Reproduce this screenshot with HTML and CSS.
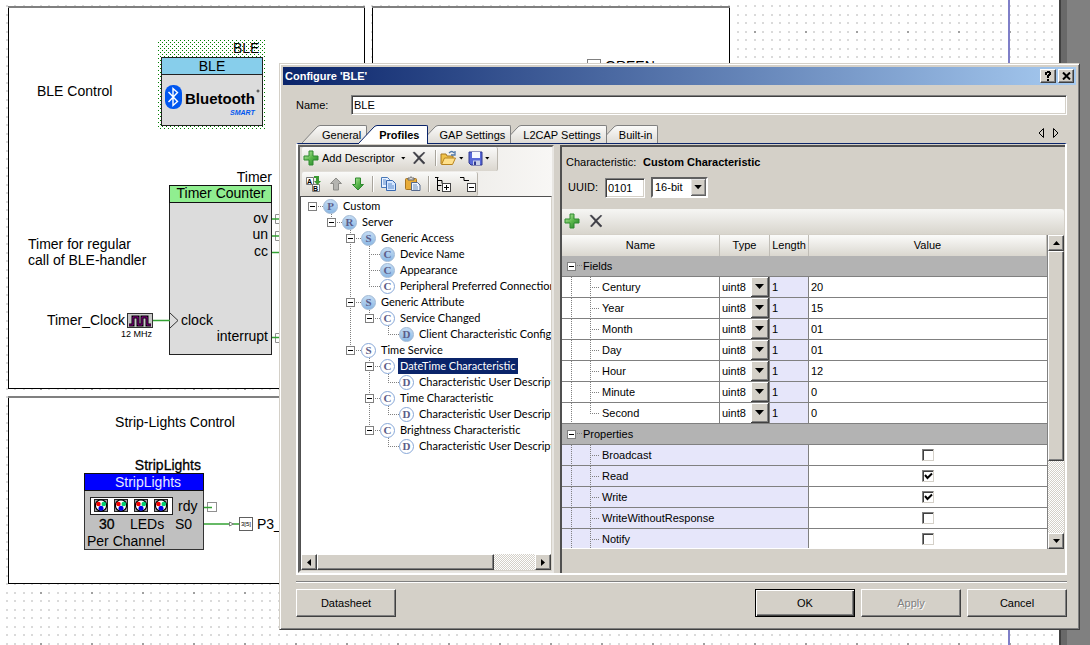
FILE: index.html
```html
<!DOCTYPE html>
<html lang="en">
<head>
<meta charset="utf-8">
<title>Configure 'BLE'</title>
<link rel="stylesheet" href="styles.css">
</head>
<body>
<main class="desktop">
<svg class="schematic" aria-label="Schematic">
  <defs>
    <pattern id="minor" x="40" y="31" width="51" height="51" patternUnits="userSpaceOnUse">
      <g fill="#dadada">
        <path d="M0 0h2v2h-2zM8 0h2v2h-2zM17 0h2v2h-2zM25 0h2v2h-2zM34 0h2v2h-2zM42 0h2v2h-2z"/>
        <path d="M0 8h2v2h-2zM8 8h2v2h-2zM17 8h2v2h-2zM25 8h2v2h-2zM34 8h2v2h-2zM42 8h2v2h-2z"/>
        <path d="M0 17h2v2h-2zM8 17h2v2h-2zM17 17h2v2h-2zM25 17h2v2h-2zM34 17h2v2h-2zM42 17h2v2h-2z"/>
        <path d="M0 25h2v2h-2zM8 25h2v2h-2zM17 25h2v2h-2zM25 25h2v2h-2zM34 25h2v2h-2zM42 25h2v2h-2z"/>
        <path d="M0 34h2v2h-2zM8 34h2v2h-2zM17 34h2v2h-2zM25 34h2v2h-2zM34 34h2v2h-2zM42 34h2v2h-2z"/>
        <path d="M0 42h2v2h-2zM8 42h2v2h-2zM17 42h2v2h-2zM25 42h2v2h-2zM34 42h2v2h-2zM42 42h2v2h-2z"/>
      </g>
      <path d="M0 0h2v2h-2z" fill="#a0a0a0"/>
    </pattern>
    <pattern id="selection" width="4" height="4" patternUnits="userSpaceOnUse">
      <path d="M0 0h1v1h-1zM2 2h1v1h-1z" fill="#008000"/>
    </pattern>
    <g id="led">
      <rect x="0.5" y="0.5" width="13" height="12" fill="#a0a0a0" stroke="#222"/>
      <circle cx="7" cy="6.5" r="5.6" fill="#fff" stroke="#000" stroke-width="1.2"/>
      <circle cx="4.4" cy="5" r="2.3" fill="#f00000"/>
      <circle cx="9.8" cy="5" r="2.3" fill="#00d070"/>
      <circle cx="7" cy="9.3" r="2.5" fill="#0000e8"/>
    </g>
  </defs>
  <rect width="1059" height="100%" fill="#fff"/>
  <rect width="1053" height="100%" fill="url(#minor)"/>
  <rect x="1008" width="2" height="100%" fill="#7f7fc8"/>
  <rect x="1059" width="2" height="100%" fill="#404040"/>
  <rect x="1061" width="6" height="100%" fill="#696969"/>

  <g fill="#fff" stroke="#000">
    <rect x="8.5" y="7.5" width="356" height="381"/>
    <rect x="372.5" y="7.5" width="357" height="381"/>
    <rect x="8.5" y="397.5" width="721" height="186"/>
  </g>
  <path d="M8 7h357M372 7h358M8 397h722" stroke="#808080" stroke-width="2"/>

  <text x="37" y="96">BLE Control</text>
  <rect x="158" y="40" width="107" height="89" fill="url(#selection)"/>
  <text x="233" y="53">BLE</text>
  <rect x="161.500" y="57.500" width="101" height="68" fill="#dcdcdc" stroke="#222"/>
  <rect x="161.500" y="57.500" width="101" height="17" fill="#87ceeb" stroke="#222"/>
  <text x="212" y="71" text-anchor="middle">BLE</text>
  <rect x="165" y="85" width="17" height="24" rx="8" fill="#0057f0"/>
  <path d="M168.500 92l9 9.500-4.500 4V88.500l4.500 4-9 9.500" fill="none" stroke="#fff" stroke-width="1.400"/>
  <text class="brand" x="185" y="104">Bluetooth</text>
  <circle cx="258" cy="91" r="1" fill="none" stroke="#333"/>
  <text class="smart" x="230" y="115">SMART</text>

  <text x="272" y="182" text-anchor="end">Timer</text>
  <rect x="169.500" y="185.500" width="102" height="169" fill="#dcdcdc" stroke="#222"/>
  <rect x="169.500" y="185.500" width="102" height="17" fill="#90ee90" stroke="#111"/>
  <text x="221" y="198" text-anchor="middle">Timer Counter</text>
  <g text-anchor="end">
    <text x="268" y="223">ov</text><text x="268" y="239">un</text>
    <text x="268" y="256">cc</text><text x="268" y="341">interrupt</text>
  </g>
  <path d="M275.500 214.500h10v9h-10zM275.500 231.500h10v9h-10zM275.500 333.500h10v9h-10z" fill="#fff" stroke="#909090"/>
  <path d="M272 219h8M272 236h8M272 252.500h8M272 337.500h8M153 320.500h17" stroke="#34a234" stroke-width="1.500"/>
  <path d="M170 313l8 7.500-8 7.500" fill="none" stroke="#333"/>
  <text x="181" y="325">clock</text>
  <text x="28" y="249">Timer for regular</text>
  <text x="28" y="265">call of BLE-handler</text>
  <text x="125" y="325" text-anchor="end">Timer_Clock</text>
  <rect x="127.500" y="313.500" width="25" height="14" fill="#c8c8c8" stroke="#333"/>
  <path d="M129 325h4v-8h5v8h4v-8h5v8h4" fill="none" stroke="#000" stroke-width="3"/>
  <path d="M129 325h4v-8h5v8h4v-8h5v8h4" fill="none" stroke="#900090"/>
  <text class="tiny" x="121" y="337">12 MHz</text>

  <text x="175" y="427" text-anchor="middle">Strip-Lights Control</text>
  <text class="strong" x="201" y="470" text-anchor="end">StripLights</text>
  <rect x="84.500" y="473.500" width="119" height="76" fill="#c0c0c0" stroke="#333"/>
  <rect x="84.500" y="473.500" width="119" height="17" fill="#0000ff" stroke="#111"/>
  <text class="light" x="148" y="487" text-anchor="middle">StripLights</text>
  <rect x="90.500" y="497.500" width="82" height="17" fill="#fff" stroke="#222"/>
  <use href="#led" x="94" y="499"/><use href="#led" x="114" y="499"/><use href="#led" x="134" y="499"/><use href="#led" x="154" y="499"/>
  <text x="178" y="511">rdy</text>
  <text class="strong" x="99" y="529">30</text><text x="130" y="529">LEDs</text><text x="175" y="529">S0</text>
  <text x="87" y="546">Per Channel</text>
  <rect x="207.500" y="502.500" width="9" height="9" fill="#fff" stroke="#909090"/>
  <path d="M204 507.500h8M204 524h35" stroke="#34a234" stroke-width="1.500"/>
  <path d="M229.500 522l4 2-4 2z" fill="#fff" stroke="#808080"/>
  <rect x="239.500" y="517.500" width="13" height="13" fill="#fff" stroke="#606060"/>
  <text class="micro" x="241" y="526">3[5]</text>
  <text x="257" y="529">P3_</text>
  <rect x="587.500" y="59.500" width="13" height="10" fill="#fff" stroke="#808080"/>
  <text x="605" y="71">GREEN</text>
</svg>

<section class="dialog" role="dialog" aria-label="Configure 'BLE'">
  <header class="titlebar">
    <h1>Configure 'BLE'</h1>
    <button class="cap" aria-label="Help"><svg width="8" height="10"><path d="M1 1h2V0h3v1h1v3H6v1H5v2H3V4h1V3h1V2H3v2H1zM3 8h2v2H3z"/></svg></button>
    <button class="cap" aria-label="Close"><svg width="9" height="8"><path d="M1 0.500l7 7M8 0.500l-7 7" stroke="#000" stroke-width="2"/></svg></button>
  </header>
  <div class="content">
    <div class="name-row"><label for="name">Name:</label><input id="name" class="field" value="BLE"></div>
    <nav class="tabs">
      <button class="tab t1"><svg class="slope" width="18" height="18"><use href="#slope"/></svg><span>General</span></button>
      <button class="tab active"><svg class="slope" width="18" height="19"><path d="M0 18L14 3Q16 .5 18 .5V19H0z" fill="#fff"/><path d="M0 18L14 3Q16 .5 18 .5" fill="none" stroke="#0a246a"/></svg><span>Profiles</span></button>
      <button class="tab t3"><svg class="slope" width="18" height="18"><use href="#slope"/></svg><span>GAP Settings</span></button>
      <button class="tab t4"><svg class="slope" width="18" height="18"><use href="#slope"/></svg><span>L2CAP Settings</span></button>
      <button class="tab t5"><svg class="slope" width="18" height="18"><use href="#slope"/></svg><span>Built-in</span></button>
      <svg class="tab-arrows" width="22" height="10"><path d="M6.500 .5v9l-4.500-4.500zM16.500 .5v9l4.500-4.500z" fill="none" stroke="#000"/></svg>
    </nav>
    <div class="page">
      <section class="left">
        <div class="bars">
          <div class="bar bar1">
            <button class="tool add"><svg width="16" height="16"><path d="M6 1h4v5h5v4h-5v5H6v-5H1V6h5z" fill="url(#green)" stroke="#2f8a2f"/></svg>Add Descriptor <i class="drop"></i></button>
            <button class="tool del" aria-label="Delete"><svg width="14" height="14"><use href="#cross"/></svg></button>
            <i class="sep"></i>
            <button class="tool open" aria-label="Open"><svg width="17" height="16"><path d="M1 14V4h5l1 2h6v3" fill="#f0c24a" stroke="#a87820"/><path d="M1.500 14.500L4.500 8h11l-3 6.500z" fill="#ffe08a" stroke="#b88420"/><path d="M9 3q3-3 5 0m1-2v4h-4" fill="none" stroke="#5078a8" stroke-width="1.300"/></svg><i class="drop"></i></button>
            <button class="tool save" aria-label="Save"><svg width="15" height="15"><path d="M1 1h13v13H3l-2-2z" fill="#5868d8" stroke="#303890"/><path d="M4 1h8v6H4z" fill="#f4f7ff"/><path d="M5 9.500h7V14H5z" fill="#c8d0e8"/><path d="M6 10.500h2V14H6z" fill="#303890"/></svg><i class="drop"></i></button>
          </div>
          <div class="bar bar2">
            <button class="tool" aria-label="Sort"><svg width="16" height="16"><path d="M1.500 1.500h7v7h-7zM7.500 8.500h7v7h-7z" fill="#fff" stroke="#777"/><text class="sort" x="2" y="8">A</text><text class="sort" x="8" y="15">B</text><path d="M9 0v2h2v3H9l3.500 4L16 5h-2V0z" fill="#3a9a32"/></svg></button>
            <button class="tool" aria-label="Move up"><svg width="14" height="14"><path d="M7 1l5.500 5.500H9.500V13h-5V6.500h-3z" fill="#b4b4b0" stroke="#8c8c88"/></svg></button>
            <button class="tool" aria-label="Move down"><svg width="14" height="14"><path d="M7 13L1.500 7.500h3V1h5v6.500h3z" fill="url(#green)" stroke="#2f8a2f"/></svg></button>
            <i class="sep"></i>
            <button class="tool" aria-label="Copy"><svg width="16" height="16"><path d="M1.500 1.500h6l2 2v8h-8z" fill="#e6f0ff" stroke="#4878b8"/><path d="M6.500 4.500h6l3 3v7h-9z" fill="#d4e6ff" stroke="#3868b0"/><path d="M3 4h3M3 6h3M3 8h3M8 8h4M8 10h6M8 12h6" stroke="#5a8acc"/></svg></button>
            <button class="tool" aria-label="Paste"><svg width="17" height="16"><rect x="1.500" y="2.500" width="11" height="11" rx="1" fill="#e8ac38" stroke="#a87420"/><path d="M4 4V2h1.500q1.500-2.500 3 0H10v2z" fill="#d8d8d8" stroke="#666"/><path d="M7.500 6.500h6l2.500 2.500v5.500H7.500z" fill="#eef4ff" stroke="#55688c"/><path d="M9 9h4M9 11h5M9 13h5" stroke="#7090b8"/></svg></button>
            <i class="sep"></i>
            <button class="tool" aria-label="Expand all"><svg width="17" height="16"><path d="M0 1.500h3.500M2.500 2v12M5 14.500h-2.500M2.500 4.500h4.500v3M2.500 9.500h4" fill="none" stroke="#000"/><rect x="7.500" y="7.500" width="8" height="8" fill="#fff" stroke="#444"/><path d="M9 11.500h5M11.500 9v5" stroke="#000"/></svg></button>
            <button class="tool" aria-label="Collapse all"><svg width="17" height="16"><path d="M0 1.500h4v3h5" fill="none" stroke="#000"/><rect x="7.500" y="7.500" width="8" height="8" fill="#fff" stroke="#444"/><path d="M9 11.500h5" stroke="#000"/></svg></button>
          </div>
        </div>
        <div class="tree-box">
          <ul class="tree">
            <li><div class="node"><button class="exp" aria-label="Collapse"></button><b class="ico full">P</b><span>Custom</span></div>
              <ul>
                <li><div class="node"><button class="exp" aria-label="Collapse"></button><b class="ico full">R</b><span>Server</span></div>
                  <ul>
                    <li><div class="node"><button class="exp" aria-label="Collapse"></button><b class="ico full">S</b><span>Generic Access</span></div>
                      <ul>
                        <li><div class="node leaf"><b class="ico full">C</b><span>Device Name</span></div></li>
                        <li><div class="node leaf"><b class="ico full">C</b><span>Appearance</span></div></li>
                        <li><div class="node leaf"><b class="ico">C</b><span>Peripheral Preferred Connection</span></div></li>
                      </ul></li>
                    <li><div class="node"><button class="exp" aria-label="Collapse"></button><b class="ico full">S</b><span>Generic Attribute</span></div>
                      <ul>
                        <li><div class="node"><button class="exp" aria-label="Collapse"></button><b class="ico">C</b><span>Service Changed</span></div>
                          <ul><li><div class="node leaf"><b class="ico full">D</b><span>Client Characteristic Configu</span></div></li></ul></li>
                      </ul></li>
                    <li><div class="node"><button class="exp" aria-label="Collapse"></button><b class="ico">S</b><span>Time Service</span></div>
                      <ul>
                        <li><div class="node"><button class="exp" aria-label="Collapse"></button><b class="ico">C</b><span class="selected">DateTime Characteristic</span></div>
                          <ul><li><div class="node leaf"><b class="ico">D</b><span>Characteristic User Descript</span></div></li></ul></li>
                        <li><div class="node"><button class="exp" aria-label="Collapse"></button><b class="ico">C</b><span>Time Characteristic</span></div>
                          <ul><li><div class="node leaf"><b class="ico">D</b><span>Characteristic User Descript</span></div></li></ul></li>
                        <li><div class="node"><button class="exp" aria-label="Collapse"></button><b class="ico">C</b><span>Brightness Characteristic</span></div>
                          <ul><li><div class="node leaf"><b class="ico">D</b><span>Characteristic User Descript</span></div></li></ul></li>
                      </ul></li>
                  </ul></li>
              </ul></li>
          </ul>
          <div class="hscroll"><button class="sb" aria-label="Scroll left"><svg width="4" height="7"><path d="M4 0v7L0 3.500z"/></svg></button><div class="hthumb"></div><button class="sb end" aria-label="Scroll right"><svg width="4" height="7"><path d="M0 0v7l4-3.500z"/></svg></button></div>
        </div>
      </section>

      <section class="right">
        <div class="info"><span class="k">Characteristic:</span><strong>Custom Characteristic</strong></div>
        <div class="info uuid"><label for="uuid">UUID:</label><input id="uuid" class="field" value="0101"><select class="bits" aria-label="UUID size"><option>16-bit</option></select></div>
        <div class="gridbar">
          <button class="tool" aria-label="Add field"><svg width="16" height="16"><path d="M6 1h4v5h5v4h-5v5H6v-5H1V6h5z" fill="url(#green)" stroke="#2f8a2f"/></svg></button>
          <button class="tool" aria-label="Delete field"><svg width="14" height="14"><use href="#cross"/></svg></button>
        </div>
        <div class="grid">
          <div class="table-wrap">
          <table>
            <colgroup><col class="c1"><col class="c2"><col class="c3"><col></colgroup>
            <thead><tr><th>Name</th><th>Type</th><th>Length</th><th>Value</th></tr></thead>
            <tbody>
              <tr class="group"><td colspan="4"><div class="node"><button class="exp" aria-label="Collapse"></button><span>Fields</span></div></td></tr>
              <tr><td class="nm">Century</td><td class="ty"><select aria-label="Century type"><option>uint8</option></select></td><td class="ln">1</td><td>20</td></tr>
              <tr><td class="nm">Year</td><td class="ty"><select aria-label="Year type"><option>uint8</option></select></td><td class="ln">1</td><td>15</td></tr>
              <tr><td class="nm">Month</td><td class="ty"><select aria-label="Month type"><option>uint8</option></select></td><td class="ln">1</td><td>01</td></tr>
              <tr><td class="nm">Day</td><td class="ty"><select aria-label="Day type"><option>uint8</option></select></td><td class="ln">1</td><td>01</td></tr>
              <tr><td class="nm">Hour</td><td class="ty"><select aria-label="Hour type"><option>uint8</option></select></td><td class="ln">1</td><td>12</td></tr>
              <tr><td class="nm">Minute</td><td class="ty"><select aria-label="Minute type"><option>uint8</option></select></td><td class="ln">1</td><td>0</td></tr>
              <tr><td class="nm last">Second</td><td class="ty"><select aria-label="Second type"><option>uint8</option></select></td><td class="ln">1</td><td>0</td></tr>
              <tr class="group"><td colspan="4"><div class="node"><button class="exp" aria-label="Collapse"></button><span>Properties</span></div></td></tr>
              <tr><td class="nm prop" colspan="3"><label for="p1">Broadcast</label></td><td class="ck"><input type="checkbox" id="p1"></td></tr>
              <tr><td class="nm prop" colspan="3"><label for="p2">Read</label></td><td class="ck"><input type="checkbox" id="p2" checked></td></tr>
              <tr><td class="nm prop" colspan="3"><label for="p3">Write</label></td><td class="ck"><input type="checkbox" id="p3" checked></td></tr>
              <tr><td class="nm prop" colspan="3"><label for="p4">WriteWithoutResponse</label></td><td class="ck"><input type="checkbox" id="p4"></td></tr>
              <tr><td class="nm prop" colspan="3"><label for="p5">Notify</label></td><td class="ck"><input type="checkbox" id="p5"></td></tr>
            </tbody>
          </table>
          </div>
          <div class="vscroll"><button class="sb" aria-label="Scroll up"><svg width="7" height="4"><path d="M0 4h7L3.500 0z"/></svg></button><div class="vthumb"></div><button class="sb vend" aria-label="Scroll down"><svg width="7" height="4"><path d="M0 0h7L3.500 4z"/></svg></button></div>
        </div>
      </section>
    </div>
    <footer class="actions">
      <button class="btn sheet">Datasheet</button>
      <button class="btn default">OK</button>
      <button class="btn" disabled>Apply</button>
      <button class="btn">Cancel</button>
    </footer>
  </div>
</section>

<svg class="defs" width="0" height="0" aria-hidden="true">
  <defs>
    <linearGradient id="green" x1="0" y1="0" x2="1" y2="1"><stop offset="0" stop-color="#c4eeb0"/><stop offset=".5" stop-color="#5cb84c"/><stop offset="1" stop-color="#1c7c28"/></linearGradient>
    <linearGradient id="tabfill" x1="0" y1="0" x2="0" y2="1"><stop offset="0" stop-color="#fbfbfa"/><stop offset="1" stop-color="#dedbd5"/></linearGradient>
    <g id="slope"><path d="M0 18L14 3Q16 .5 18 .5V18z" fill="url(#tabfill)"/><path d="M0 18L14 3Q16 .5 18 .5" fill="none" stroke="#808080"/></g>
    <path id="cross" d="M1 1.500L2.500 1 7 5.500 12 1l.8.8L8 6.800l5 5.200-1.500 1L7 8.200 2.500 13l-1-1L6 7z" fill="#3c3c44" stroke="#3c3c44" stroke-width=".5"/>
  </defs>
</svg>
</main>
</body>
</html>
```
FILE: styles.css
```css
* { box-sizing: border-box; }
body { margin: 0; background: #808080; }
body, button, input, select { font-family: "Liberation Sans", Arial, sans-serif; font-size: 11px; line-height: 13px; color: #000; }
button { padding: 0; border: 0; background: none; }
ul { margin: 0; padding: 0; list-style: none; }

.desktop { position: relative; height: 100vh; overflow: hidden; }
.schematic { display: block; width: 100%; height: 100%; }
.schematic text { font-size: 14px; }
.schematic .brand { font-size: 15px; font-weight: bold; }
.schematic .smart { font-size: 7px; font-weight: bold; font-style: italic; fill: #0057f0; }
.schematic .tiny { font-size: 9px; }
.schematic .micro { font-size: 6px; }
.schematic .strong { stroke: #000; stroke-width: 0.3px; }
.schematic .light { fill: #e8e8ff; }
.defs { position: absolute; }

.dialog { position: absolute; top: 63px; left: 279px; right: 10px; bottom: 15px; display: flex; flex-direction: column; padding: 2px; background: #d4d0c8; border: 1px solid; border-color: #d4d0c8 #404040 #404040 #d4d0c8; box-shadow: inset 1px 1px #fff, inset -1px -1px #808080; }
.titlebar { display: flex; align-items: center; gap: 2px; height: 18px; margin: 1px; padding: 0 2px; background: linear-gradient(90deg, #0a246a, #a6caf0); flex: none; }
.titlebar h1 { flex: 1; margin: 0; font-size: 11px; color: #fff; }
.cap { display: flex; align-items: center; justify-content: center; width: 16px; height: 14px; }
.cap, .sb, .hthumb, .vthumb, .btn { background: #d4d0c8; border: 1px solid; border-color: #fff #404040 #404040 #fff; box-shadow: inset -1px -1px #808080; }

.content { flex: 1; display: flex; flex-direction: column; min-height: 0; padding: 9px 10px 10px 14px; }
.name-row { display: flex; align-items: center; flex: none; }
.name-row label { width: 55px; }
.name-row .field { flex: 1; }
.field { height: 20px; min-width: 0; padding: 1px 2px; background: #fff; border: 1px solid; border-color: #808080 #fff #fff #808080; box-shadow: inset 1px 1px #404040, inset -1px -1px #d4d0c8; outline: 0; border-radius: 0; }

.tabs { display: flex; flex: none; margin-top: 10px; padding-left: 6px; height: 18px; }
.tab { display: flex; position: relative; margin-right: -8px; height: 18px; }
.tab span { height: 18px; padding: 3px 5px 0 2px; background: linear-gradient(#fbfbfa, #dedbd5); border: solid #808080; border-width: 1px 1px 0 0; border-top-right-radius: 2px; }
.tab.t1 { z-index: 4; }
.tab.t3 { z-index: 3; }
.tab.t4 { z-index: 2; }
.tab.t5 { z-index: 1; }
.tab.active { z-index: 5; font-weight: bold; height: 19px; }
.tab.active span { height: 19px; padding-right: 7px; background: #fff; border-color: #0a246a; }
.tab-arrows { margin: 3px 8px 0 auto; }

.page { flex: 1; display: flex; gap: 6px; min-height: 0; padding-top: 1px; border: 2px solid #fff; border-top: 1px solid #0a246a; }
.left { display: flex; flex-direction: column; width: 256px; flex: none; border: 2px solid; border-color: #606060 #e8e6e2 #e8e6e2 #606060; }
.bars { display: flex; flex-direction: column; gap: 1px; padding-left: 2px; background: linear-gradient(90deg, #dedbd5, #f8f7f5); flex: none; }
.bar { display: flex; align-items: center; height: 24px; background: linear-gradient(#fafaf9, #dad6ce); border-right: 1px solid #bab6ae; border-radius: 2px; padding-left: 1px; }
.bar1 { width: 196px; gap: 4px; padding-bottom: 2px; }
.bar2 { width: 176px; padding-left: 3px; gap: 8px; }
.tool { display: flex; align-items: center; gap: 3px; }
.drop { width: 5px; height: 3px; margin-left: 3px; background: #000; clip-path: polygon(0 0, 100% 0, 50% 100%); }
.open .drop, .save .drop { margin-left: -1px; }
.tool.del { margin-left: 2px; }
.sep { width: 1px; height: 16px; margin-left: 5px; background: #a8a49c; box-shadow: 1px 0 #fff; }
.bar2 .sep { margin: 0 -1px; }
.sort { font-size: 7px; font-weight: bold; }

.tree-box { flex: 1; display: flex; flex-direction: column; min-height: 0; background: #fff; border: 1px solid; border-color: #505050 #d4d0c8 #d4d0c8 #505050; }
.tree { flex: 1; padding: 1px 0 0 7px; overflow: hidden; font-family: Lato, "Liberation Sans", sans-serif; }
.tree ul { padding-left: 19px; }
.tree li { background: repeating-linear-gradient(#808080 0 1px, transparent 1px 2px) 4px 0 / 1px 100% no-repeat; }
.tree li:last-child { background-size: 1px 8px; }
.tree > li:last-child { background-size: 0 0; }
.node { display: flex; align-items: center; height: 16px; white-space: nowrap; background: repeating-linear-gradient(90deg, #808080 0 1px, transparent 1px 2px) 4px 8px / 12px 1px no-repeat; }
.exp { width: 9px; height: 9px; flex: none; border: 1px solid #808080; background: linear-gradient(#000, #000) 1px 3px / 5px 1px no-repeat #fff; }
.ico { width: 15px; height: 15px; flex: none; margin-left: 6px; border: 1px solid #88a8d8; border-radius: 50%; background: #fff; color: #5c5c88; font: bold 11px/13px "Liberation Serif", serif; text-align: center; }
.ico.full { background: linear-gradient(#c4dcf4, #8cb8e4); border-color: #a0b8d4; }
.leaf .ico { margin-left: 15px; }
.tree .node span { padding: 1px 2px; margin-left: 3px; height: 16px; }
.tree .node .selected { background: #0a246a; color: #fff; }

.hscroll, .vscroll { display: flex; flex: none; background: conic-gradient(#fff 25%, #d4d0c8 0 50%, #fff 0 75%, #d4d0c8 0) 0 0 / 2px 2px; }
.hscroll { height: 16px; }
.sb { display: flex; align-items: center; justify-content: center; width: 16px; height: 16px; flex: none; }
.hthumb { width: 177px; }
.sb.end { margin-left: auto; }
.vscroll { flex-direction: column; width: 17px; border-left: 1px solid #808080; }
.vthumb { height: 67%; }
.sb.vend { margin-top: auto; }

.right { flex: 1; display: flex; flex-direction: column; min-width: 0; border: solid #505050; border-width: 2px 0 0 2px; padding: 8px 1px 24px 0; }
.info { display: flex; align-items: center; height: 14px; padding-left: 4px; flex: none; }
.info .k { width: 77px; }
.uuid { height: 21px; margin: 8px 0 11px; padding-left: 6px; }
.uuid label { width: 37px; }
.uuid .field { width: 40px; }
select { appearance: none; border: 0; border-radius: 0; outline: 0; background-color: #fff; background-repeat: no-repeat; background-position: right center; background-image: url("data:image/svg+xml,%3Csvg xmlns='http://www.w3.org/2000/svg' width='18' height='20' viewBox='0 0 18 20'%3E%3Cpath fill='%23404040' d='M0 0h18v20H0z'/%3E%3Cpath fill='%23fff' d='M0 0h17v19H0z'/%3E%3Cpath fill='%23808080' d='M1 1h16v18H1z'/%3E%3Cpath fill='%23d4d0c8' d='M1 1h15v17H1z'/%3E%3Cpath d='M4 7h9l-4.500 5z'/%3E%3C/svg%3E"); }
.bits { width: 57px; height: 21px; margin-left: 6px; padding: 0 18px 0 2px; border: 2px solid; border-color: #606060 #fff #fff #606060; background-size: 15px 17px; }
.gridbar { display: flex; align-items: center; gap: 9px; height: 25px; flex: none; padding: 0 0 2px 2px; background: linear-gradient(#f6f6f4, #d8d5cd); border-top-right-radius: 3px; }
.grid { flex: 1; display: flex; min-height: 0; padding-top: 1px; }
.table-wrap { flex: 1; overflow: hidden; background: #fff; border-bottom: 1px solid #fff; }
table { width: 100%; table-layout: fixed; border-collapse: separate; border-spacing: 0; }
.c1 { width: 158px; }
.c2 { width: 50px; }
.c3 { width: 39px; }
th { height: 21px; padding: 0; font-weight: normal; background: linear-gradient(#fbfbfa, #dad7cf); border-right: 1px solid #c0bdb6; }
td { height: 21px; padding: 0 2px; border: solid #808080; border-width: 0 1px 1px 0; }
td:last-child { border-right: 0; }
.group td { padding: 0 5px; background: #b3b3b3; }
.group .node { gap: 7px; background-position: 4px 7px; }
.nm { padding-left: 40px; background: repeating-linear-gradient(#808080 0 1px, transparent 1px 2px) 9px 0 / 1px 100% no-repeat, repeating-linear-gradient(#808080 0 1px, transparent 1px 2px) 28px 0 / 1px 100% no-repeat, repeating-linear-gradient(90deg, #808080 0 1px, transparent 1px 2px) 28px 10px / 10px 1px no-repeat #fff; }
.nm.last { background-size: 1px 100%, 1px 10px, 10px 1px; }
.nm.prop, .ln { background-color: #e6e6fa; }
.ty { padding: 0; }
.ty select { display: block; width: 100%; height: 20px; padding: 0 18px 0 2px; }
.ck { padding: 0; text-align: center; }
.ck input { appearance: none; display: block; width: 12px; height: 12px; margin: 0 auto; background: #fff; border: 1px solid; border-color: #808080 #d4d0c8 #d4d0c8 #808080; box-shadow: inset 1px 1px #404040; }
.ck input:checked { background: url("data:image/svg+xml,%3Csvg xmlns='http://www.w3.org/2000/svg' width='10' height='10'%3E%3Cpath d='M2 4l2.500 3L9 2.500' fill='none' stroke='%23000' stroke-width='2'/%3E%3C/svg%3E") no-repeat #fff; }

.actions { display: flex; gap: 6px; flex: none; margin-top: 6px; padding-top: 7px; border-top: 1px solid #808080; box-shadow: inset 0 1px #fff; }
.btn { width: 100px; height: 28px; }
.btn.sheet { margin-right: auto; }
.btn.default { border-color: #000; box-shadow: inset 1px 1px #fff, inset -1px -1px #404040, inset -2px -2px #808080; }
.btn:disabled { color: #808080; text-shadow: 1px 1px #fff; }
```
